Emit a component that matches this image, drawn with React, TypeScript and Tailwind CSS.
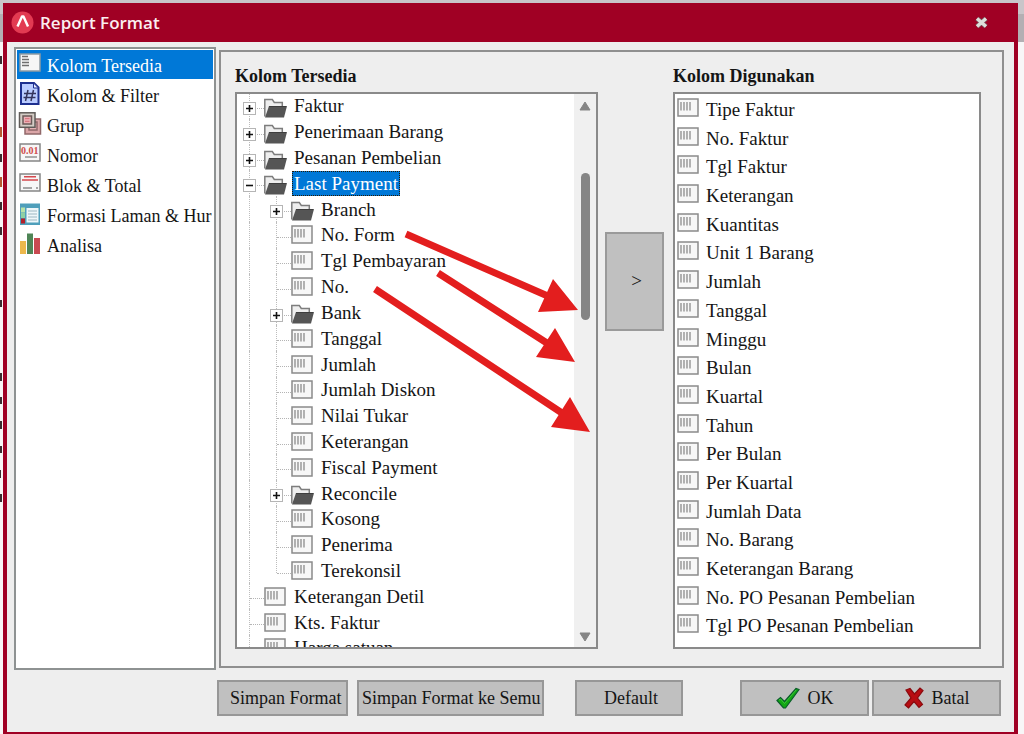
import type { ReactNode } from "react";

type TreeRow = { label: string; depth: number; folder?: boolean; open?: boolean; last?: boolean };

const treeRows: TreeRow[] = [
  { label: "Faktur", depth: 0, folder: true },
  { label: "Penerimaan Barang", depth: 0, folder: true },
  { label: "Pesanan Pembelian", depth: 0, folder: true },
  { label: "Last Payment", depth: 0, folder: true, open: true },
  { label: "Branch", depth: 1, folder: true },
  { label: "No. Form", depth: 1 },
  { label: "Tgl Pembayaran", depth: 1 },
  { label: "No.", depth: 1 },
  { label: "Bank", depth: 1, folder: true },
  { label: "Tanggal", depth: 1 },
  { label: "Jumlah", depth: 1 },
  { label: "Jumlah Diskon", depth: 1 },
  { label: "Nilai Tukar", depth: 1 },
  { label: "Keterangan", depth: 1 },
  { label: "Fiscal Payment", depth: 1 },
  { label: "Reconcile", depth: 1, folder: true },
  { label: "Kosong", depth: 1 },
  { label: "Penerima", depth: 1 },
  { label: "Terekonsil", depth: 1, last: true },
  { label: "Keterangan Detil", depth: 0 },
  { label: "Kts. Faktur", depth: 0 },
  { label: "Harga satuan", depth: 0 },
];

const usedColumns = [
  "Tipe Faktur",
  "No. Faktur",
  "Tgl Faktur",
  "Keterangan",
  "Kuantitas",
  "Unit 1 Barang",
  "Jumlah",
  "Tanggal",
  "Minggu",
  "Bulan",
  "Kuartal",
  "Tahun",
  "Per Bulan",
  "Per Kuartal",
  "Jumlah Data",
  "No. Barang",
  "Keterangan Barang",
  "No. PO Pesanan Pembelian",
  "Tgl PO Pesanan Pembelian",
];

function NavIcon({ children }: { children: ReactNode }) {
  return (
    <svg width="24" height="24" viewBox="0 0 24 24" className="mt-[2px] shrink-0" aria-hidden="true">
      {children}
    </svg>
  );
}

const navItems: { label: string; icon: ReactNode }[] = [
  {
    label: "Kolom Tersedia",
    icon: (
      <>
        <rect x="2" y="2" width="20" height="17" fill="#f6f6f6" stroke="#8d9aa3" strokeWidth="1.5" />
        <path d="M4 4.5h6M4 7.500h7M4 10.500h7M4 13.500h7" stroke="#6f6f6f" strokeWidth="1.3" />
      </>
    ),
  },
  {
    label: "Kolom & Filter",
    icon: (
      <>
        <path d="M3 1h13l4.500 4.500V22H3z" fill="#b9cbff" stroke="#1d2f8f" strokeWidth="2" />
        <path d="M15.500 1v5h5z" fill="#e8eeff" stroke="#1d2f8f" />
        <path d="M10 8 7.500 19M15.500 8 13 19M6 11.500h12M5.500 15.500h12" stroke="#34345c" strokeWidth="1.5" fill="none" />
      </>
    ),
  },
  {
    label: "Grup",
    icon: (
      <>
        <rect x="7" y="7" width="15.500" height="15" fill="#dba6a8" stroke="#91686a" strokeWidth="1.5" />
        <rect x="11" y="10" width="8" height="8" fill="#e9b6b8" stroke="#91686a" strokeWidth="1.5" />
        <rect x="1.500" y="0.800" width="15.500" height="14.500" fill="#d4cdc6" stroke="#5f5b58" strokeWidth="1.5" />
        <rect x="5" y="4" width="8.500" height="8" fill="#ecb0b5" stroke="#6b5a58" strokeWidth="1.5" />
        <path d="M7 6.700h4.500M7 9.300h4.500" stroke="#d26b74" />
      </>
    ),
  },
  {
    label: "Nomor",
    icon: (
      <>
        <rect x="2" y="2" width="20" height="17" fill="#f7f7f7" stroke="#868686" strokeWidth="1.500" />
        <text x="3" y="12" fontSize="10" fontWeight="700" fill="#cf4b4b" fontFamily="Liberation Serif, serif">
          0.01
        </text>
        <path d="M7 15h12" stroke="#929292" strokeWidth="1.500" />
      </>
    ),
  },
  {
    label: "Blok & Total",
    icon: (
      <>
        <rect x="2" y="2" width="20" height="17" fill="#f7f7f7" stroke="#868686" strokeWidth="1.500" />
        <path d="M6 4.800h12M4 8h16" stroke="#d5484d" strokeWidth="1.500" />
        <path d="M5 16h9M18 16h2" stroke="#8a8a8a" strokeWidth="1.300" />
      </>
    ),
  },
  {
    label: "Formasi Laman & Hur",
    icon: (
      <>
        <rect x="2" y="1.500" width="20" height="21.500" fill="#4f9fbb" />
        <rect x="3" y="5.500" width="4" height="5" fill="#b9e3a7" />
        <rect x="3" y="11" width="4" height="5" fill="#8ed0a2" />
        <rect x="3" y="16.500" width="4" height="5" fill="#b3202a" />
        <rect x="8.500" y="6" width="12" height="14.500" fill="#eef7fa" />
        <path d="M10 9h9M10 12h9M10 15h9M10 18h9" stroke="#9cb7c2" />
      </>
    ),
  },
  {
    label: "Analisa",
    icon: (
      <>
        <path d="M2 9h6v13H2z" fill="#edb84c" />
        <path d="M9 1.500h6V22H9z" fill="#4f8556" />
        <path d="M16 6h6v16h-6z" fill="#c84a52" />
      </>
    ),
  },
];

function FieldIcon() {
  return (
    <svg width="22" height="19" viewBox="0 0 22 19" className="shrink-0" aria-hidden="true">
      <rect x="1" y="1" width="20" height="17" fill="#f7f7f7" stroke="#8a8a8a" strokeWidth="1.500" />
      <path d="M4 4v8.500M7 4v8.500M10 4v8.500M13 4v8.500" stroke="#8c8c8c" strokeWidth="1.300" />
    </svg>
  );
}

function FolderIcon() {
  return (
    <svg width="23" height="20" viewBox="0 0 23 20" className="mt-1 -mr-px shrink-0" aria-hidden="true">
      <path d="M.8 18.500V1.500h7.500l2 3h8v4" fill="#eeeeee" stroke="#7d7d7d" strokeWidth="1.500" />
      <path d="M5 8h18l-3 11.500H1z" fill="#555555" />
      <path d="M5 8.500h17" stroke="#3e3e3e" />
    </svg>
  );
}

function Guide({ row, own }: { row: TreeRow; own: boolean }) {
  return (
    <span className="relative flex w-[27px] shrink-0 self-stretch pl-3">
      <span
        className={`flex w-px border-l border-dotted border-[#bdbdbd] ${own && row.last ? "h-[15px]" : ""}`}
      />
      {own && <span className="mt-[15px] flex-1 self-start border-t border-dotted border-[#b4b4b4]" />}
      {own && row.folder && (
        <button
          type="button"
          aria-label={row.open ? `Tutup ${row.label}` : `Buka ${row.label}`}
          className="absolute top-[9px] left-[6px] flex size-[13px] items-center justify-center border border-[#b5b5b5] bg-white"
        >
          <svg width="9" height="9" viewBox="0 0 9 9" aria-hidden="true">
            <path d={row.open ? "M1 4.500h7" : "M1 4.500h7M4.500 1v7"} stroke="#111" strokeWidth="1.600" />
          </svg>
        </button>
      )}
    </span>
  );
}

function Tree() {
  return (
    <div className="relative flex h-[557px] overflow-hidden border-2 border-[#8a8a8a] bg-white">
      <ul className="-mt-px flex h-[568px] min-w-0 flex-1 flex-col">
        {treeRows.map((row) => (
          <li key={row.label} className="flex min-h-0 flex-1 items-center">
            {row.depth === 1 && <Guide row={row} own={false} />}
            <Guide row={row} own />
            {row.folder ? <FolderIcon /> : <FieldIcon />}
            <span
              className={
                row.open
                  ? "ml-[6px] border border-dotted border-[#2b1a00] bg-[#0078d7] px-px leading-[23px] whitespace-nowrap text-white"
                  : "ml-2 leading-[23px] whitespace-nowrap"
              }
            >
              {row.label}
            </span>
          </li>
        ))}
      </ul>
      <div className="flex w-[22px] shrink-0 flex-col items-center bg-[#f0f0f0] pt-[7px] pb-[5px]">
        <svg width="12" height="10" viewBox="0 0 12 10" aria-hidden="true">
          <path d="M6 1 11 9H1z" fill="#858585" stroke="#858585" strokeLinejoin="round" />
        </svg>
        <div className="mt-[62px] h-[147px] w-[9px] rounded-full bg-[#858585]" />
        <svg width="12" height="10" viewBox="0 0 12 10" className="mt-auto" aria-hidden="true">
          <path d="M6 9 11 1H1z" fill="#858585" stroke="#858585" strokeLinejoin="round" />
        </svg>
      </div>
      <svg
        width="363"
        height="557"
        viewBox="235 92 363 557"
        className="pointer-events-none absolute -top-[2px] -left-[2px]"
        aria-hidden="true"
      >
        <g stroke="#e31e1e" strokeWidth="7">
          <path d="M406 234 550 297M438 273 550 345M375 289 565 415" />
        </g>
        <g fill="#e31e1e">
          <path d="M578 310 553 279 538 312zM575 362 555 328 536 357zM590 432 570 397 551 427z" />
        </g>
      </svg>
    </div>
  );
}

function FooterButton({ className, children }: { className: string; children: ReactNode }) {
  return (
    <button
      type="button"
      className={`flex h-9 items-center overflow-hidden border-2 border-[#979797] bg-[#c0c0c0] text-lg whitespace-nowrap ${className}`}
    >
      {children}
    </button>
  );
}

export default function App() {
  return (
    <div className="relative flex min-h-screen flex-col bg-[linear-gradient(#c9c5c9_0,#c9c5c9_14px,#b3afb3_14px,#b3afb3_42px,#f8f6f7_42px)] pt-[3px] pr-[6px] pl-[3px] font-['Liberation_Serif','Times_New_Roman',serif] text-[19px] text-[#151515]">
      {/* edge of the window behind the dialog */}
      <svg width="3" height="734" viewBox="0 0 3 734" className="absolute top-0 left-0" aria-hidden="true">
        <path
          d="M0 56h2v8h-2M0 154h2v8h-2M0 202h2v8h-2M0 227h2v8h-2M0 300h2v7h-2M0 373h2v8h-2M0 397h2v7h-2M0 421h2v8h-2M0 446h2v7h-2M0 470h1v8h-1M0 494h2v8h-2"
          fill="#3b2c30"
        />
        <path d="M0 127h2v10h-2M0 177h2v10h-2" fill="#b5562f" />
      </svg>
      <div className="flex flex-1 flex-col border-x-4 border-b-2 border-[#a00024] bg-[#eeeeee]">
        <header className="flex h-[39px] shrink-0 items-center bg-[#a00024] pr-[25px] pl-1">
          <svg width="23" height="23" viewBox="0 0 23 23" aria-hidden="true">
            <circle cx="11.500" cy="11.500" r="11" fill="#e23a52" />
            <path d="M6.500 15.500 11 5.500h1.500l4.500 10" fill="none" stroke="#fff" strokeWidth="2.400" strokeLinejoin="round" />
          </svg>
          <h1 className="ml-[6px] flex-1 pt-px font-['Open_Sans','Noto_Sans',sans-serif] text-[17px] font-semibold text-[#fbeef0]">
            Report Format
          </h1>
          <button type="button" aria-label="Tutup">
            <svg width="15" height="13" viewBox="0 0 15 13" aria-hidden="true">
              <path d="M3 2.500 12 10.500M12 2.500 3 10.500" stroke="#77505b" strokeWidth="5" />
              <path d="M3 2.500 12 10.500M12 2.500 3 10.500" stroke="#dededa" strokeWidth="3.400" />
            </svg>
          </button>
        </header>

        <main className="flex gap-[3px] pt-[5px] pr-[10px] pl-[7px]">
          <nav className="w-[202px] shrink-0 border-2 border-[#8e9292] bg-white p-px">
            <ul>
              {navItems.map((item, i) => (
                <li key={item.label} className="h-[30px]">
                  <button
                    type="button"
                    aria-current={i === 0 ? "page" : undefined}
                    className={`flex w-full items-start gap-[5px] pl-px text-left text-lg leading-[32px] whitespace-nowrap ${
                      i === 0 ? "h-[29px] bg-[#0078d7] text-white" : "h-[30px]"
                    }`}
                  >
                    <NavIcon>{item.icon}</NavIcon>
                    {item.label}
                  </button>
                </li>
              ))}
            </ul>
          </nav>

          <section className="mt-[3px] mb-[2px] flex min-w-0 flex-1 border-2 border-[#8f8f8f] pt-[11px] pr-[21px] pb-[17px] pl-[14px]">
            <div className="min-w-0 flex-[363]">
              <h2 className="h-[29px] text-lg leading-[26px] font-bold">Kolom Tersedia</h2>
              <Tree />
            </div>
            <div className="flex w-[75px] shrink-0 flex-col pt-[169px] pr-[9px] pl-[7px]">
              <button
                type="button"
                className="h-[99px] border-2 border-[#9a9a9a] bg-[#c0c0c0] pl-1"
              >
                &gt;
              </button>
            </div>
            <div className="flex min-w-0 flex-[308] flex-col">
              <h2 className="h-[29px] text-lg leading-[26px] font-bold">Kolom Digunakan</h2>
              <ul className="flex flex-1 flex-col border-2 border-[#8a8a8a] bg-white pt-[2px] pb-[6px] pl-[2px]">
                {usedColumns.map((label) => (
                  <li key={label} className="flex flex-1 items-start gap-[7px] leading-[28px] whitespace-nowrap">
                    <span className="flex pt-[2px]">
                      <FieldIcon />
                    </span>
                    {label}
                  </li>
                ))}
              </ul>
            </div>
          </section>
        </main>

        <footer className="mt-[10px] mb-4 flex pr-[13px] pl-[210px]">
          <FooterButton className="w-[131px] pl-[11px]">Simpan Format</FooterButton>
          <FooterButton className="ml-[9px] w-[187px] pl-[3px]">Simpan Format ke Semu</FooterButton>
          <FooterButton className="ml-[31px] w-[108px] justify-center pl-1">Default</FooterButton>
          <FooterButton className="ml-auto w-[129px] justify-center gap-2">
            <svg width="24" height="22" viewBox="0 0 24 22" aria-hidden="true">
              <path d="M1 13.500 4.500 10.500 8.500 14.500 20 1.500 23 2.500 9.500 21H7.500z" fill="#12a812" stroke="#0a5c2a" strokeWidth="1.200" />
              <path d="M3 13 4.500 12 8.500 16.500 20 3" fill="none" stroke="#3cc23a" />
            </svg>
            OK
          </FooterButton>
          <FooterButton className="ml-[3px] w-[129px] justify-center gap-2">
            <svg width="20" height="22" viewBox="0 0 20 22" aria-hidden="true">
              <path
                d="M2 3 6 1.500 10.500 7 16 1 19 3.500 13.500 11 18.500 17.500 15 20.500 10 14.500 4.500 21 1 18 7 11z"
                fill="#b80d12"
                stroke="#8a0a0e"
                strokeWidth="1.200"
              />
            </svg>
            Batal
          </FooterButton>
        </footer>
      </div>
    </div>
  );
}
